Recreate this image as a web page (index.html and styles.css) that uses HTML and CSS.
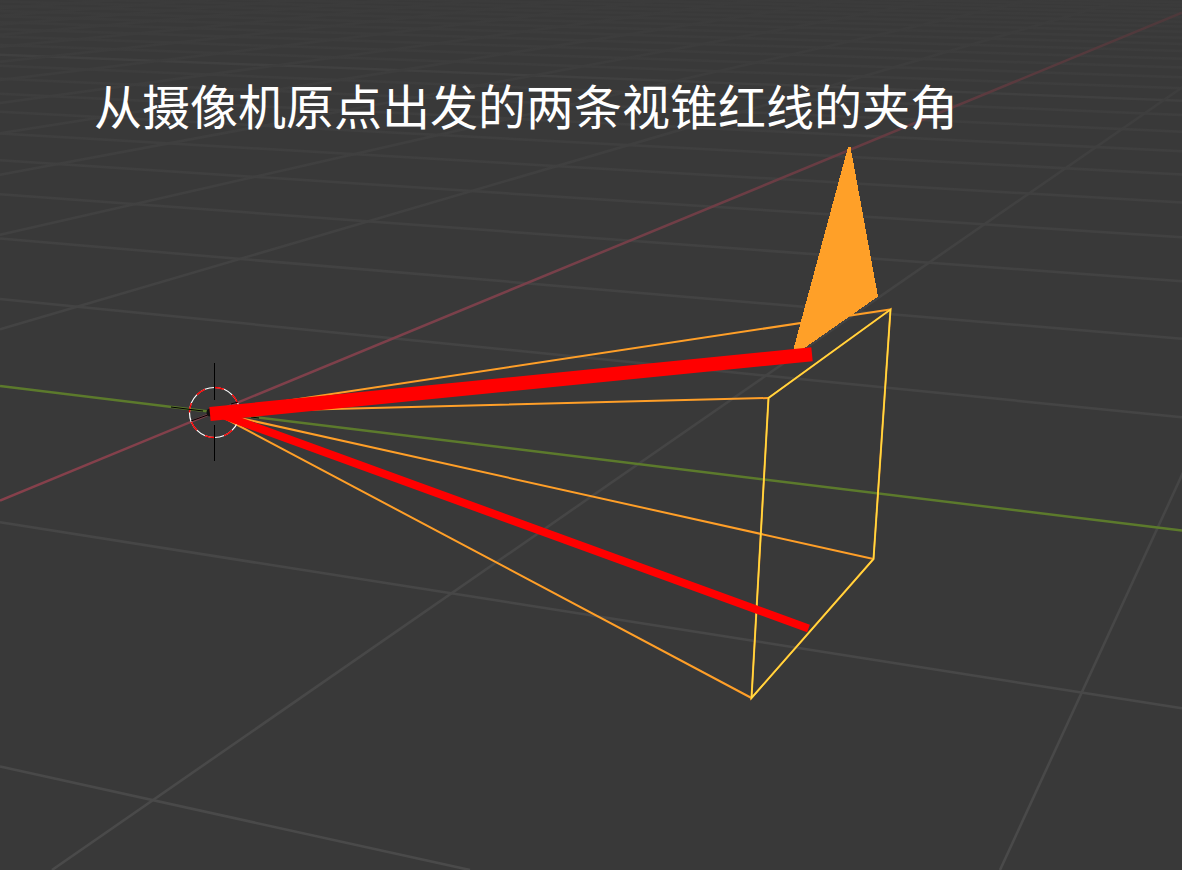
FILE: index.html
```html
<!DOCTYPE html>
<html lang="zh-CN">
<head>
<meta charset="utf-8">
<title>视锥夹角</title>
<link rel="stylesheet" href="styles.css">
</head>
<body>
<main class="viewport">
  <svg class="scene" viewBox="0 0 1182 870" preserveAspectRatio="xMinYMin slice" aria-hidden="true">
    <defs>
      <linearGradient id="grid-fade" gradientUnits="userSpaceOnUse" x1="0" y1="0" x2="0" y2="870">
        <stop offset="0" stop-color="#3b3b3b"/>
        <stop offset="0.12" stop-color="#3e3e3e"/>
        <stop offset="0.35" stop-color="#434343"/>
        <stop offset="1" stop-color="#4a4a4a"/>
      </linearGradient>
      <linearGradient id="axis-fade" gradientUnits="userSpaceOnUse" x1="0" y1="500" x2="1182" y2="13">
        <stop offset="0" stop-color="#87404b"/>
        <stop offset="0.45" stop-color="#79404a"/>
        <stop offset="0.75" stop-color="#643b41"/>
        <stop offset="1" stop-color="#4d393b"/>
      </linearGradient>
    </defs>
    <g id="grid" class="grid"></g>
    <path class="axis axis-y" d="M0 386L1182 530.5"/>
    <path class="axis axis-x" d="M0 500.7L1182 12.7"/>

    <path class="frustum-side" d="M213 412L890 309.500M213 412L768.500 398M213 412L873.500 559M213 412L751.500 698"/>
    <path class="frustum-side" d="M890.500 309.500L768.500 398L751.500 698L873.500 559Z"/>
    <path class="frustum-face" d="M890.500 309.500L768.500 398L751.500 698L873.500 559Z"/>
    <path class="up-marker" d="M848 147H850.500L878 296.500L803 349H793.500Z"/>

    <circle class="cursor-ring" cx="214.500" cy="412.500" r="25"/>
    <circle class="cursor-dash" cx="214.500" cy="412.500" r="25" pathLength="16"/>
    <path class="cursor-cross" d="M214.500 363V400M214.500 425V461M171 407L203 411M191 421L209 414.500M251 417L259 418M231 404L238 402"/>
    <circle class="origin" cx="210.500" cy="412.500" r="4"/>

    <path class="ray ray-lower" d="M213 411.500L808.500 628.500"/>
    <path class="ray ray-upper" d="M210 414L812 354.300"/>
  </svg>
  <h1 class="caption">从摄像机原点出发的两条视锥红线的夹角</h1>
</main>
<script src="grid.js"></script>
</body>
</html>
```
FILE: styles.css
```css
body {
  margin: 0;
  background: #393939;
}

.viewport {
  display: grid;
  min-height: 100vh;
  overflow: hidden;
}

.scene,
.caption {
  grid-area: 1 / 1;
}

.scene {
  display: block;
  width: 100%;
  height: 100%;
  min-height: 100vh;
  fill: none;
}

.caption {
  z-index: 1;
  margin: 0;
  padding: 80px 0 0 94px;
  color: #fff;
  font: 400 48px/48px "Noto Sans CJK SC", sans-serif;
}

.grid {
  stroke: url(#grid-fade);
  stroke-width: 2.5;
}

.grid .major {
  stroke: #404040;
}

.axis {
  stroke-width: 2.5;
}

.axis-x {
  stroke: url(#axis-fade);
}

.axis-y {
  stroke: #5c7a2c;
}

.frustum-side {
  stroke: #ff9f28;
  stroke-width: 2;
}

.frustum-face {
  stroke: #ffdb40;
  stroke-width: 1.5;
}

.up-marker {
  fill: #ffa028;
  shape-rendering: crispEdges;
}

.ray {
  stroke: #f00;
}

.ray-upper {
  stroke-width: 14;
}

.ray-lower {
  stroke-width: 8;
}

.cursor-ring {
  stroke: #fff;
  stroke-width: 1.2;
}

.cursor-dash {
  stroke: #f00;
  stroke-width: 1.4;
  stroke-dasharray: 1 1;
}

.cursor-cross {
  stroke: #000;
}

.origin {
  fill: #111;
}
```
FILE: grid.js
```js
// Perspective floor grid: two families of lines, each meeting at its vanishing point.
const grid = document.getElementById("grid");
const vanishing = { x: 1444, y: -94 };

function addLine(x1, y1, x2, y2, major) {
  const line = document.createElementNS("http://www.w3.org/2000/svg", "line");
  line.setAttribute("x1", x1);
  line.setAttribute("y1", y1);
  line.setAttribute("x2", x2);
  line.setAttribute("y2", y2);
  if (major) line.setAttribute("class", "major");
  grid.appendChild(line);
}

for (let k = -2; k <= 32; k++) {
  if (k === 0) continue;
  const left = (386 - 21.04 * k) / (1 + 0.22076 * k);
  const right = (530.5 - 20.64 * k) / (1 + 0.2219 * k);
  if (k === -2) addLine(0, left, 470, 870, false);
  else addLine(0, left, 1182, right, k === 10);
}

for (let j = 1; j <= 12; j++) {
  const left = (500.7 - 37.7 * j) / (1 + 0.4059 * j);
  addLine(0, left, vanishing.x, vanishing.y, false);
}

addLine(52, 870, vanishing.x, vanishing.y, false);
addLine(1000, 870, vanishing.x, vanishing.y, false);
```
